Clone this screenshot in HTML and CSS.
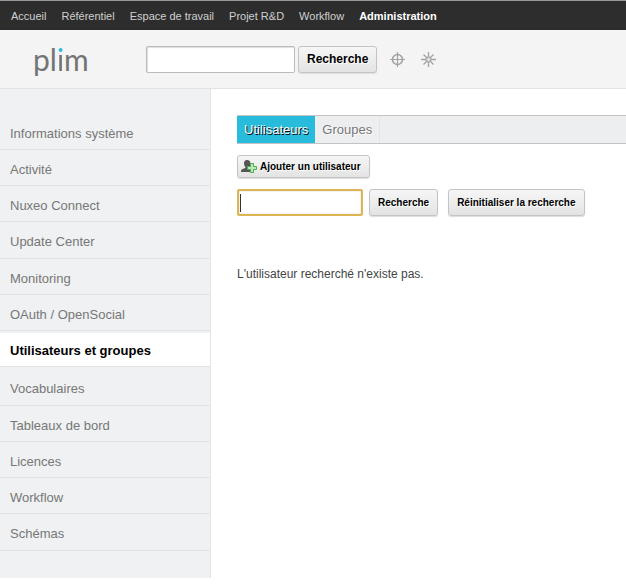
FILE: index.html
```html
<!DOCTYPE html>
<html lang="fr">
<head>
<meta charset="utf-8">
<title>Administration</title>
<link rel="stylesheet" href="styles.css">
</head>
<body>
<nav class="topbar" aria-label="Navigation principale">
  <a href="#">Accueil</a>
  <a href="#">Référentiel</a>
  <a href="#">Espace de travail</a>
  <a href="#">Projet R&amp;D</a>
  <a href="#">Workflow</a>
  <a href="#" class="current">Administration</a>
</nav>
<header class="header">
  <a href="#" class="logo">pl<span class="logo-dot">i</span>m</a>
  <form class="search">
    <input type="text" class="search-input" aria-label="Rechercher">
    <button type="button" class="btn btn-large">Recherche</button>
  </form>
  <a href="#" class="tool" aria-label="Recherche avancée">
    <svg width="15" height="15" viewBox="0 0 15 15" fill="none" stroke="#a2a2a2"><circle cx="7.5" cy="7.5" r="5" stroke-width="1.6"/><path d="M7.5 0v15M0 7.5h15" stroke-width="1.2"/></svg>
  </a>
  <a href="#" class="tool" aria-label="Recherche à facettes">
    <svg width="15" height="15" viewBox="0 0 15 15"><path fill="none" stroke="#a2a2a2" stroke-width="1.3" d="M7.5 0v15M0 7.5h15M2.5 2.5l10 10M12.5 2.5l-10 10"/><circle cx="7.5" cy="7.5" r="2.7" fill="#c6c6c6" stroke="#a2a2a2"/><circle cx="7.5" cy="7.5" r="1" fill="#fff"/></svg>
  </a>
</header>
<div class="page">
  <aside class="sidebar">
    <ul class="menu">
      <li><a href="#">Informations système</a></li>
      <li><a href="#">Activité</a></li>
      <li><a href="#">Nuxeo Connect</a></li>
      <li><a href="#">Update Center</a></li>
      <li><a href="#">Monitoring</a></li>
      <li><a href="#">OAuth / OpenSocial</a></li>
      <li class="active"><a href="#">Utilisateurs et groupes</a></li>
      <li><a href="#">Vocabulaires</a></li>
      <li><a href="#">Tableaux de bord</a></li>
      <li><a href="#">Licences</a></li>
      <li><a href="#">Workflow</a></li>
      <li><a href="#">Schémas</a></li>
    </ul>
  </aside>
  <main class="content">
    <nav class="tabs" aria-label="Onglets">
      <a href="#" class="tab selected">Utilisateurs</a>
      <a href="#" class="tab">Groupes</a>
    </nav>
    <button type="button" class="btn btn-add">
      <svg width="17" height="14" viewBox="0 0 17 14"><path fill="#555" d="M6 0C3.9 0 2.8 1.5 3 3.6c.1 1.5.6 2.6 1.4 3.3v1.2C2.5 8.8.6 9 .2 10.3L0 12h11V5.5L9 5c.3-.7.4-1.2.4-1.9C9.4 1.2 8 0 6 0z"/><path fill="#b9e8b4" stroke="#55a957" d="M9.5 3.5h3v3h3v3h-3v3h-3v-3h-3v-3h3z"/></svg>
      Ajouter un utilisateur
    </button>
    <form class="user-search">
      <input type="text" class="user-input" aria-label="Utilisateur">
      <button type="button" class="btn">Recherche</button>
      <button type="button" class="btn">Réinitialiser la recherche</button>
    </form>
    <p class="message">L'utilisateur recherché n'existe pas.</p>
  </main>
</div>
</body>
</html>
```
FILE: styles.css
```css
* { box-sizing: border-box; }

body {
  margin: 0;
  background: #fff;
  color: #444;
  font-family: "Liberation Sans", Arial, sans-serif;
  font-size: 12px;
}

a { color: inherit; text-decoration: none; }

.topbar {
  display: flex;
  gap: 15px;
  height: 30px;
  padding: 0 11px;
  border-top: 1px solid #999;
  background: #2d2d2d;
  color: #d0d0d0;
  font-size: 11px;
  line-height: 30px;
  white-space: nowrap;
}

.topbar .current { color: #fff; font-weight: bold; }

.header {
  display: flex;
  align-items: center;
  height: 59px;
  padding: 0 33px;
  border-bottom: 1px solid #e3e3e3;
  background: #f4f4f4;
}

.logo {
  width: 113px;
  color: #737476;
  font-family: Lato, sans-serif;
  font-size: 30px;
  line-height: 36px;
}

.logo-dot {
  background: linear-gradient(#28bbdb 13px, #737476 13px);
  background-clip: text;
  -webkit-background-clip: text;
  color: transparent;
}

.search { display: flex; gap: 3px; margin-right: 13px; }

.search-input {
  width: 149px;
  height: 27px;
  border: 1px solid #bbb;
  border-radius: 2px;
  background: #fff;
  box-shadow: inset 1px 1px 1px #ddd;
}

.tool { display: flex; margin-right: 16px; }

.btn {
  height: 27px;
  padding: 0 8px;
  border: 1px solid #c4c4c4;
  border-radius: 3px;
  background: linear-gradient(#f6f6f6, #e3e3e3);
  box-shadow: 0 1px 1px #ddd;
  color: #000;
  font-family: inherit;
  font-size: 10px;
  font-weight: bold;
  text-shadow: 1px 1px 0 #fff;
  white-space: nowrap;
}

.btn-large { font-size: 12px; }

.page { display: flex; align-items: flex-start; }

.sidebar {
  flex: 0 0 211px;
  padding: 25px 0 27px;
  border-right: 1px solid #e2e3e4;
  background: #eff1f2;
}

.menu { margin: 0; padding: 0; list-style: none; }

.menu li { border-bottom: 1px solid #e2e3e4; }

.menu a {
  display: block;
  padding: 12px 10px 8px;
  color: #777;
  font-size: 13px;
  line-height: 15px;
}

.menu li:nth-child(4n) a { padding-bottom: 9px; }

.menu .active { margin: 2px 0; background: #fff; }

.menu .active a {
  padding-top: 10px;
  color: #000;
  font-weight: bold;
}

.content { flex: 1; padding: 26px 0 0 26px; }

.tabs {
  display: flex;
  height: 29px;
  margin-bottom: 11px;
  border: 1px solid #c4c4c4;
  border-width: 1px 0;
  background: #edeef0;
}

.tab {
  padding: 0 7px;
  border-right: 1px solid #e3e4e6;
  color: #777;
  font-size: 13px;
  line-height: 27px;
  text-shadow: 1px 1px 0 #fff;
}

.tab.selected {
  border-right: 0;
  background: #28bbdb;
  color: #fff;
  text-shadow: 1px 1px 0 #000;
}

.btn-add {
  display: flex;
  align-items: center;
  gap: 2px;
  height: 23px;
  padding: 0 8px 0 3px;
}

.user-search { display: flex; margin-top: 11px; }

.user-search .btn { margin-right: 10px; }

.user-input {
  width: 126px;
  height: 27px;
  margin-right: 6px;
  padding: 2px;
  border: 2px solid #dfb452;
  border-radius: 2px;
  outline: none;
  background: #fff linear-gradient(#333, #333) 1px center / 1px 18px no-repeat;
  box-shadow: inset 0 0 1px #777;
}

.message {
  margin: 50px 0 0;
  font-size: 12px;
  line-height: 16px;
}
```
